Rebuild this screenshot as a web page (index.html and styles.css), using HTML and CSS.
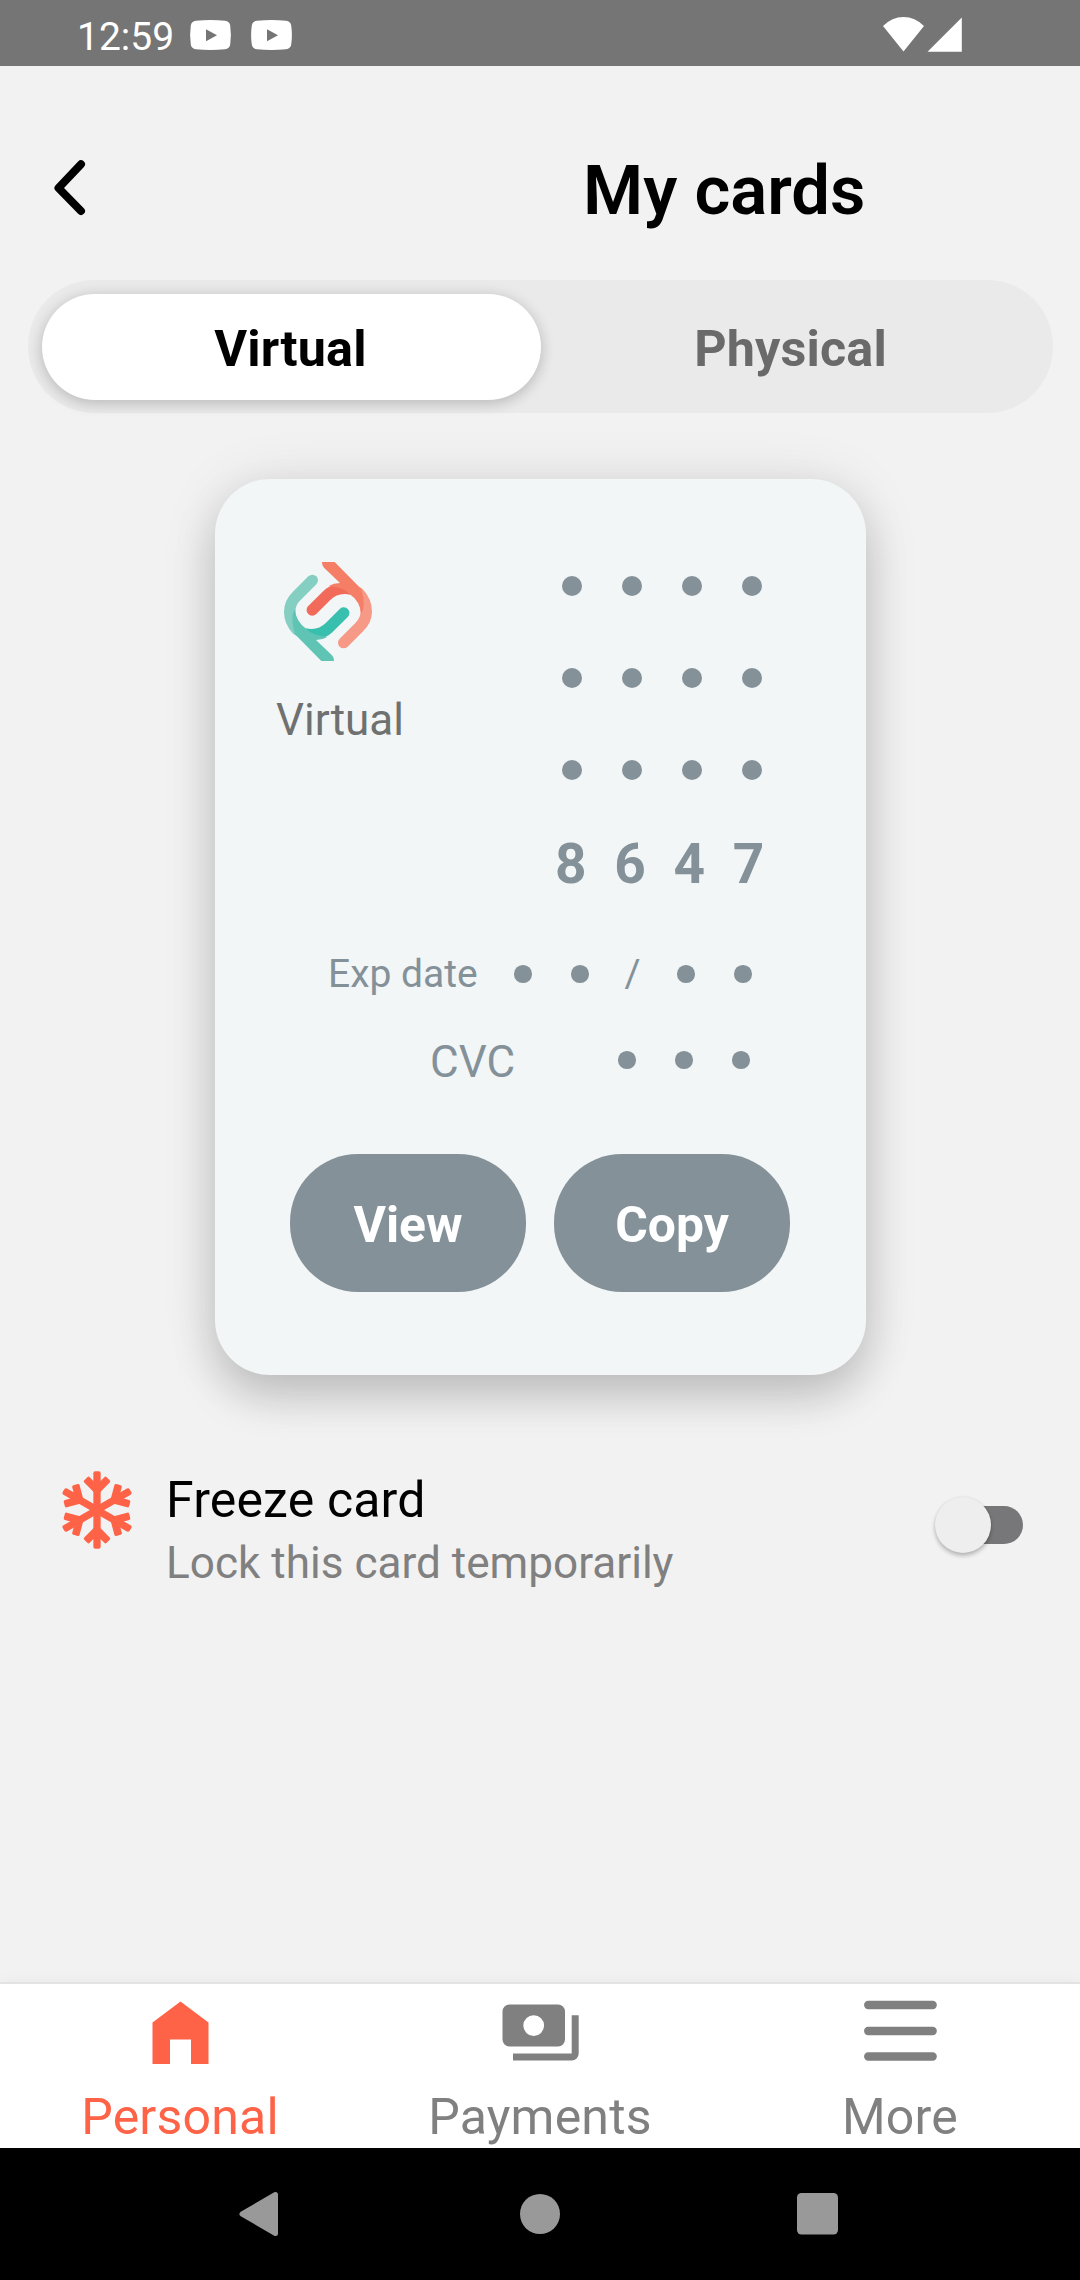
FILE: index.html
```html
<!DOCTYPE html>
<html lang="en">
<head>
<meta charset="utf-8">
<title>My cards</title>
<link rel="stylesheet" href="styles.css">
</head>
<body>
<div class="screen">
  <div class="status">
    <span class="clock">12:59</span>
    <svg class="video" width="41" height="30" viewBox="0 0 41 30"><path fill="#fff" fill-rule="evenodd" d="M6 .8Q20.500-.6 35 .8Q39.500 1.200 40.200 5.500Q41.600 15 40.200 24.500Q39.500 28.800 35 29.200Q20.500 30.600 6 29.200Q1.500 28.800.8 24.500Q-.6 15 .8 5.500Q1.500 1.200 6 .8ZM16 9.300V21.300L27 15.300Z"/></svg>
    <svg class="video" width="41" height="30" viewBox="0 0 41 30"><path fill="#fff" fill-rule="evenodd" d="M6 .8Q20.500-.6 35 .8Q39.500 1.200 40.200 5.500Q41.600 15 40.200 24.500Q39.500 28.800 35 29.200Q20.500 30.600 6 29.200Q1.500 28.800.8 24.500Q-.6 15 .8 5.500Q1.500 1.200 6 .8ZM16 9.300V21.300L27 15.300Z"/></svg>
    <svg class="signal" width="79" height="36" viewBox="0 0 79 36"><path fill="#fff" d="M0 10Q9 1 20.500 1T41 10L20.500 35.500ZM44.500 35.800L78.800 1.500V35.800Z"/></svg>
  </div>

  <header class="header">
    <svg class="back" width="32" height="56" viewBox="0 0 32 56"><path d="M27 4.200L4.500 28L27 51" fill="none" stroke="#000" stroke-width="8" stroke-linecap="round" stroke-linejoin="round"/></svg>
    <h1 class="title">My cards</h1>
  </header>

  <div class="tabs">
    <div class="tab tab-active">Virtual</div>
    <div class="tab">Physical</div>
  </div>

  <section class="card">
    <div class="card-top">
      <div class="brand">
        <svg class="logo" width="88" height="99" viewBox="72 66 264 297">
          <defs>
            <g id="hook">
              <path class="c-light" fill="none" stroke-width="34" stroke-linecap="round" d="M157 121L110 168Q89 188 89 215Q89 245 112 270"/>
              <path class="c-strong" d="M240 206A17 17 0 0 1 264 230L217 277Q199 294 180 294Q155 290 135 264Q172 274 198 248Z"/>
              <path class="c-mid" d="M105 208Q107 245 140 268Q156 287 202 291Q187 300 168 300L212 342Q222 350 222 363H184L105 283Q96 260 97 235Q97 220 105 208Z"/>
            </g>
          </defs>
          <use href="#hook" class="teal"/>
          <use href="#hook" class="coral" transform="rotate(180 204 214.500)"/>
        </svg>
        <span class="brand-name">Virtual</span>
      </div>
      <div class="number">
        <div class="dots"><i></i><i></i><i></i><i></i></div>
        <div class="dots"><i></i><i></i><i></i><i></i></div>
        <div class="dots"><i></i><i></i><i></i><i></i></div>
        <div class="digits">8647</div>
      </div>
    </div>
    <div class="row exp">
      <span class="exp-label">Exp date</span>
      <span class="small-dots"><i></i><i></i></span>
      <span class="slash">/</span>
      <span class="small-dots"><i></i><i></i></span>
    </div>
    <div class="row cvc">
      <span class="cvc-label">CVC</span>
      <span class="small-dots"><i></i><i></i><i></i></span>
    </div>
    <div class="actions">
      <button class="btn">View</button>
      <button class="btn">Copy</button>
    </div>
  </section>

  <div class="freeze">
    <svg class="flake" width="68" height="78" viewBox="98 93 204 234" fill="#ff6347">
      <defs>
        <g id="arm">
          <rect x="189" y="94" width="22" height="120" rx="6"/>
          <rect x="-12" y="-47" width="23" height="54" rx="5" transform="translate(200 149) rotate(-45)"/>
          <rect x="-11" y="-47" width="23" height="54" rx="5" transform="translate(200 149) rotate(45)"/>
        </g>
      </defs>
      <use href="#arm"/>
      <use href="#arm" transform="rotate(60 200 210)"/>
      <use href="#arm" transform="rotate(120 200 210)"/>
      <use href="#arm" transform="rotate(180 200 210)"/>
      <use href="#arm" transform="rotate(240 200 210)"/>
      <use href="#arm" transform="rotate(300 200 210)"/>
    </svg>
    <div class="freeze-text">
      <div class="freeze-title">Freeze card</div>
      <div class="freeze-sub">Lock this card temporarily</div>
    </div>
    <div class="switch"><span class="thumb"></span></div>
  </div>

  <nav class="tabbar">
    <div class="item item-active">
      <svg width="76" height="64" viewBox="0 0 76 64"><path fill="currentColor" d="M10.500 22.500L38.500 1.500L66.500 22.500V64H49V39.500H28V64H10.500Z"/></svg>
      <span>Personal</span>
    </div>
    <div class="item">
      <svg width="76" height="64" viewBox="0 0 76 64"><path fill="currentColor" fill-rule="evenodd" d="M7.500 4.500H56A7 7 0 0 1 63 11.500V39.500A7 7 0 0 1 56 46.500H7.500A7 7 0 0 1 .5 39.500V11.500A7 7 0 0 1 7.500 4.500ZM31.700 15.200A10.400 10.400 0 1 0 31.700 36A10.400 10.400 0 1 0 31.700 15.200ZM69.700 15.200H76.700V53.500A7 7 0 0 1 69.700 60.500H11V53.500H69.700Z"/></svg>
      <span>Payments</span>
    </div>
    <div class="item">
      <svg width="76" height="64" viewBox="0 0 76 64"><path stroke="currentColor" stroke-width="8.300" stroke-linecap="round" d="M6.200 5H70.700M6.200 31H70.700M6.200 56.500H70.700"/></svg>
      <span>More</span>
    </div>
  </nav>

  <div class="sysnav">
    <svg width="40" height="46" viewBox="0 0 40 46"><path fill="#999" stroke="#999" stroke-width="5" stroke-linejoin="round" d="M2 23L35.500 3.500V42.500Z"/></svg>
    <svg width="40" height="40" viewBox="0 0 40 40"><circle cx="20" cy="20" r="20" fill="#999"/></svg>
    <svg width="41" height="42" viewBox="0 0 41 42"><rect width="41" height="41.500" rx="4.500" fill="#999"/></svg>
  </div>
</div>
</body>
</html>
```
FILE: styles.css
```css
* {
  box-sizing: border-box;
}

body {
  margin: 0;
  font-family: Roboto, "Noto Sans", sans-serif;
}

svg {
  display: block;
  flex: none;
  overflow: visible;
}

.screen {
  display: flex;
  flex-direction: column;
  width: 1080px;
  height: 2280px;
  overflow: hidden;
  background: #f2f2f2;
}

/* status bar */
.status {
  display: flex;
  flex: none;
  align-items: flex-start;
  height: 66px;
  padding: 0 118px 0 77px;
  background: #757575;
  color: #fff;
}

.clock {
  width: 113px;
  padding-top: 13px;
  font-size: 39px;
  line-height: 48px;
}

.video {
  margin: 20px 20px 0 0;
}

.signal {
  margin: 16px 0 0 auto;
}

/* header */
.header {
  display: flex;
  flex: none;
  align-items: flex-start;
  height: 214px;
  padding-left: 54px;
}

.back {
  margin-top: 94px;
}

.title {
  margin: 85px 0 0 497px;
  font-size: 68.75px;
  font-weight: 600;
  line-height: 80px;
  white-space: nowrap;
}

/* segmented control */
.tabs {
  display: grid;
  flex: none;
  grid-template-columns: 499px 499px;
  height: 133px;
  margin: 0 27px 0 28px;
  padding: 14px 14px 13px;
  border-radius: 66px;
  background: #eaeaea;
}

.tab {
  padding-top: 4px;
  border-radius: 53px;
  color: #6a6a6a;
  font-size: 50.3px;
  font-weight: 700;
  letter-spacing: .15px;
  line-height: 101px;
  text-align: center;
}

.tab-active {
  padding-right: 2px;
  background: #fff;
  color: #000;
  box-shadow: 0 4px 14px rgba(0, 0, 0, .17), 0 0 18px rgba(0, 0, 0, .06);
}

/* card */
.card {
  flex: none;
  width: 651px;
  height: 896px;
  margin: 66px 0 0 215px;
  border-radius: 55px;
  background: #f2f6f7;
  color: #849199;
  box-shadow: 0 22px 44px rgba(0, 0, 0, .18), 0 2px 60px rgba(0, 0, 0, .09);
}

.card-top {
  display: flex;
  justify-content: space-between;
  height: 455px;
  padding: 83px 120px 0 61px;
}

.logo {
  margin-left: 8px;
}

.teal {
  --light: #84cec2;
  --mid: #60c4b5;
  --strong: #38bfae;
}

.coral {
  --light: #f69987;
  --mid: #f47f66;
  --strong: #f26b5a;
}

.c-light {
  stroke: var(--light);
}

.c-mid {
  fill: var(--mid);
}

.c-strong {
  fill: var(--strong);
}

.brand-name {
  display: block;
  margin-top: 33px;
  color: #6f7070;
  font-size: 44px;
  line-height: 52px;
}

.number {
  width: 200px;
  padding-top: 14px;
}

.dots {
  display: flex;
  gap: 40px;
  height: 92px;
  margin-left: 15.5px;
}

.dots i {
  flex: none;
  width: 20px;
  height: 20px;
  border-radius: 50%;
  background: currentColor;
}

.digits {
  margin-top: -18px;
  margin-left: 9px;
  font-size: 55px;
  font-weight: 700;
  letter-spacing: 27.7px;
  line-height: 60px;
}

.row {
  display: flex;
  align-items: center;
}

.small-dots {
  display: flex;
  gap: 39.5px;
}

.small-dots i {
  width: 17.5px;
  height: 17.5px;
  border-radius: 50%;
  background: currentColor;
}

.exp {
  height: 80px;
  padding-left: 113px;
  font-size: 39px;
}

.exp-label {
  width: 186px;
  line-height: 48px;
}

.slash {
  width: 88.5px;
  padding-left: 36px;
  line-height: 48px;
}

.cvc {
  height: 92px;
  padding-left: 215px;
  font-size: 44px;
}

.cvc-label {
  width: 188px;
  padding-top: 4px;
  line-height: 54px;
}

.actions {
  display: flex;
  gap: 28px;
  margin: 48px 0 0 75px;
}

.btn {
  width: 236px;
  height: 138px;
  padding: 3px 0 0;
  border: 0;
  border-radius: 68px;
  background: #849199;
  color: #fff;
  font: 700 49.8px/60px Roboto, "Noto Sans", sans-serif;
}

/* freeze row */
.freeze {
  display: flex;
  flex: none;
  align-items: flex-start;
  margin-top: 96px;
  padding: 0 57px 0 63px;
}

.freeze-text {
  flex: 1;
  padding-left: 35px;
}

.freeze-title {
  font-size: 50px;
  letter-spacing: .15px;
  line-height: 58px;
}

.freeze-sub {
  margin-top: 8px;
  color: #808080;
  font-size: 44.1px;
  line-height: 52px;
}

.switch {
  display: flex;
  align-items: center;
  width: 80px;
  height: 38px;
  margin-top: 35px;
  border-radius: 19px;
  background: #777779;
}

.thumb {
  width: 56px;
  height: 56px;
  margin-left: -8px;
  border-radius: 50%;
  background: #eee;
  box-shadow: 0 3px 4px rgba(0, 0, 0, .24), 0 0 3px rgba(0, 0, 0, .08);
}

/* bottom tabs */
.tabbar {
  display: grid;
  flex: none;
  grid-template-columns: repeat(3, 1fr);
  height: 166px;
  margin-top: auto;
  border-top: 2px solid #e3e3e3;
  background: #fff;
  box-shadow: 0 -2px 12px rgba(0, 0, 0, .035);
}

.item {
  display: flex;
  flex-direction: column;
  align-items: center;
  padding-top: 16px;
  color: #808080;
  font-size: 50px;
  letter-spacing: .2px;
  line-height: 58px;
}

.item span {
  margin-top: 24px;
}

.item-active {
  color: #ff6347;
}

/* system navigation */
.sysnav {
  display: flex;
  flex: none;
  align-items: center;
  gap: 237px;
  height: 132px;
  padding-left: 243px;
  background: #000;
}

.sysnav svg:first-child {
  margin-left: -3px;
  margin-right: 3px;
}
```
